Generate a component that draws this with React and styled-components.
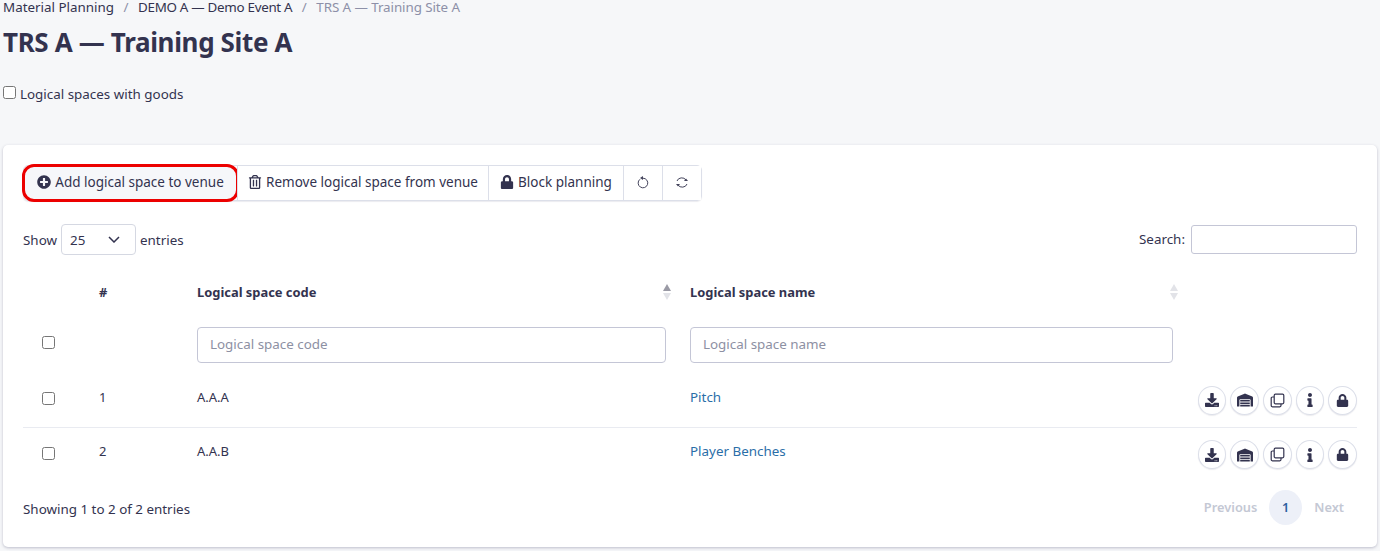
import React from 'react';
import styled, { createGlobalStyle } from 'styled-components';
import { FaPlusCircle, FaRegTrashAlt, FaLock, FaDownload, FaWarehouse, FaInfo } from 'react-icons/fa';

const GlobalStyle = createGlobalStyle`
	html, body {
		margin: 0;
		background: #f6f7f9;
		color: #33334f;
		font-family: "Noto Sans", "Liberation Sans", sans-serif;
		font-size: 13.4px;
	}
`;

const Page = styled.div`
	padding: 0 3px;
	height: 551px;
	box-sizing: border-box;
	overflow: hidden;
`;
const Breadcrumbs = styled.nav`
	display: flex;
	gap: 9.5px;
	height: 14px;
	line-height: 14px;
	font-size: 13.4px;
`;
const Crumb = styled.span`
	color: ${props => props.$muted ? '#8d90a8' : '#33334f'};
	letter-spacing: ${props => props.$tight || 0}px;
`;
const Divider = styled.span`
	color: #8d90a8;
`;
const Title = styled.h1`
	margin: 12px 0 0;
	font-size: 26px;
	line-height: 32px;
	font-weight: 700;
	letter-spacing: -0.35px;
	color: #33334f;
`;
const GoodsLabel = styled.label`
	display: flex;
	align-items: center;
	gap: 4px;
	margin-top: 26px;
	height: 20px;
`;
const Check = styled.input.attrs({ type: 'checkbox' })`
	appearance: none;
	display: block;
	width: 13px;
	height: 13px;
	margin: 0;
	background: #fff;
	border: 1px solid #767676;
	border-radius: 2.5px;
	box-sizing: border-box;
`;
const GoodsCheck = styled(Check)`
	margin-bottom: 4px;
`;
const Card = styled.section`
	margin-top: 41px;
	height: 402px;
	box-sizing: border-box;
	padding: 20px;
	background: #fff;
	border-radius: 5px;
	box-shadow: 0 1px 3px rgba(60, 60, 100, 0.3);
`;
const Toolbar = styled.div`
	display: inline-flex;
	height: 36px;
	border: 1px solid #dcdfe9;
	border-radius: 5px;
	box-sizing: border-box;
	box-shadow: 0 1px 1px rgba(60, 60, 100, 0.1);
`;
const ToolButton = styled.button`
	position: relative;
	display: flex;
	align-items: center;
	justify-content: center;
	gap: 4px;
	width: ${props => props.$width}px;
	padding: 0 0 2px;
	border: 0;
	border-left: ${props => props.$first ? '0' : '1px solid #dcdfe9'};
	background: ${props => props.$active ? '#f6f7fa' : '#fff'};
	color: #33334f;
	font: inherit;
	font-size: 13.5px;
	white-space: nowrap;
	border-radius: ${props => props.$active ? '10px' : '0'};
	outline: ${props => props.$active ? '3px solid #ec0000' : 'none'};
	outline-offset: -1px;
	svg {
		flex: none;
	}
`;
const Controls = styled.div`
	display: flex;
	justify-content: space-between;
	align-items: center;
	margin-top: 23px;
	height: 31px;
`;
const Inline = styled.div`
	display: flex;
	align-items: center;
	gap: ${props => props.$gap || 4}px;
`;
const SearchLabel = styled.span`
	padding-bottom: 2px;
`;
const LengthSelect = styled.div`
	display: flex;
	align-items: center;
	justify-content: space-between;
	width: 75px;
	height: 31px;
	padding: 0 15px 0 8px;
	box-sizing: border-box;
	border: 1px solid #d5d8e2;
	border-radius: 4px;
`;
const SearchBox = styled.input`
	width: 166px;
	height: 29px;
	padding: 0 8px;
	box-sizing: border-box;
	border: 1px solid #c4c6d6;
	border-radius: 3px;
	background: #fff;
`;
const Table = styled.table`
	width: 100%;
	margin-top: 15px;
	table-layout: fixed;
	border-collapse: collapse;
`;
const HeadCell = styled.th`
	position: relative;
	height: 47px;
	box-sizing: border-box;
	padding: 0 12px 3px;
	text-align: left;
	font-weight: 700;
	font-size: 12.9px;
	color: #33334f;
`;
const FilterCell = styled.td`
	height: 56px;
	box-sizing: border-box;
	padding: 0 12px;
	vertical-align: middle;
`;
const BodyRow = styled.tr`
	border-top: ${props => props.$lined ? '1px solid #e9ebf1' : '0'};
`;
const BodyCell = styled.td`
	height: ${props => props.$height}px;
	box-sizing: border-box;
	padding: 0 12px 6px;
	vertical-align: middle;
	font-size: 13px;
`;
const CheckCell = styled(BodyCell)`
	padding: 0 0 2px 19px;
`;
const CheckHolder = styled(FilterCell)`
	padding: 0 0 6px 19px;
`;
const ActionCell = styled.td`
	padding: 1px 0 0;
	vertical-align: middle;
`;
const Filter = styled.input`
	display: block;
	width: 100%;
	height: 36px;
	padding: 0 12px 2px;
	box-sizing: border-box;
	border: 1px solid #c4c6d6;
	border-radius: 4px;
	background: #fff;
	font: inherit;
	&::placeholder {
		color: #8d90a3;
		opacity: 1;
	}
`;
const SpaceLink = styled.a`
	color: #2a6ea8;
	font-size: 13.4px;
	text-decoration: none;
`;
const Actions = styled.div`
	display: flex;
	justify-content: flex-end;
	gap: 4px;
`;
const RoundButton = styled.button`
	display: flex;
	align-items: center;
	justify-content: center;
	width: 28.7px;
	height: 29px;
	padding: 0;
	border: 1px solid #dcdfe9;
	border-radius: 50%;
	background: #fff;
	color: #33334f;
	box-shadow: 0 1px 1px rgba(60, 60, 100, 0.1);
`;
const Sorter = styled.svg`
	position: absolute;
	top: 13px;
	right: 6px;
`;
const Footer = styled.div`
	display: flex;
	justify-content: space-between;
	align-items: center;
	margin-top: 8px;
	height: 36px;
`;
const Summary = styled.span`
	margin-top: 3px;
`;
const Pagination = styled.div`
	display: flex;
	align-items: center;
	gap: 12px;
	padding-right: 13px;
	font-size: 12.8px;
	font-weight: 600;
	color: #c4c8d4;
`;
const CurrentPage = styled.span`
	display: flex;
	align-items: center;
	justify-content: center;
	width: 33px;
	height: 35px;
	border-radius: 50%;
	background: #edf0f8;
	color: #2c5f9e;
`;

const SortIcon = ({ up }) => (
	<Sorter width="10" height="18" viewBox="0 0 10 18">
		<path d="M5 1 L9 8 H1 Z" fill={up ? '#9a9aa5' : '#e2e3e8'} />
		<path d="M5 17 L9 10 H1 Z" fill="#e2e3e8" />
	</Sorter>
);

const UndoIcon = () => (
	<svg width="13" height="14" viewBox="0 0 13 14" fill="none" stroke="#44445c" strokeWidth="1">
		<path d="M2.9 4.3 A4.8 4.8 0 1 0 6 3.2" />
		<path d="M6 1 V5 L3 3 Z" fill="#44445c" stroke="none" />
	</svg>
);

const RefreshIcon = () => (
	<svg width="14" height="13" viewBox="0 0 14 13" fill="none" stroke="#44445c" strokeWidth="1">
		<path d="M2 5 A5 4.6 0 0 1 11 4" />
		<path d="M12 8 A5 4.6 0 0 1 3 9" />
		<path d="M9 5 H13 L11 2.6 Z M1 8 H5 L3 10.4 Z" fill="#44445c" stroke="none" />
	</svg>
);

const CloneIcon = () => (
	<svg width="15" height="15" viewBox="0 0 15 15" fill="none" stroke="#33334f" strokeWidth="1.2">
		<rect x="4.2" y="1.2" width="9.6" height="9.6" rx="1.2" />
		<path d="M4 4 H2.4 A1.2 1.2 0 0 0 1.2 5.2 V12.6 A1.2 1.2 0 0 0 2.4 13.8 H9.8 A1.2 1.2 0 0 0 11 12.6 V11" />
	</svg>
);

const rows = [
	{ id: 1, code: 'A.A.A', name: 'Pitch', height: 54 },
	{ id: 2, code: 'A.A.B', name: 'Player Benches', height: 54 },
];

const App = () => (
	<Page>
		<GlobalStyle />
		<Breadcrumbs>
			<Crumb>Material Planning</Crumb>
			<Divider>/</Divider>
			<Crumb $tight={-0.3}>DEMO A — Demo Event A</Crumb>
			<Divider>/</Divider>
			<Crumb $muted $tight={-0.08}>TRS A — Training Site A</Crumb>
		</Breadcrumbs>
		<Title>TRS A — Training Site A</Title>
		<GoodsLabel><GoodsCheck />Logical spaces with goods</GoodsLabel>
		<Card>
			<Toolbar>
				<ToolButton $first $active $width={213}><FaPlusCircle size={14} />Add logical space to venue</ToolButton>
				<ToolButton $width={251}><FaRegTrashAlt size={14} />Remove logical space from venue</ToolButton>
				<ToolButton $width={135}><FaLock size={14} />Block planning</ToolButton>
				<ToolButton $width={39}><UndoIcon /></ToolButton>
				<ToolButton $width={39}><RefreshIcon /></ToolButton>
			</Toolbar>
			<Controls>
				<Inline>
					Show
					<LengthSelect>
						25
						<svg width="12" height="7" viewBox="0 0 12 7" fill="none" stroke="#33334f" strokeWidth="1.5"><path d="M1 1 L6 6 L11 1" /></svg>
					</LengthSelect>
					entries
				</Inline>
				<Inline $gap={6}>
					<SearchLabel>Search:</SearchLabel>
					<SearchBox />
				</Inline>
			</Controls>
			<Table>
				<colgroup>
					<col style={{ width: 64 }} />
					<col style={{ width: 98 }} />
					<col style={{ width: 493 }} />
					<col style={{ width: 507 }} />
					<col style={{ width: 172 }} />
				</colgroup>
				<thead>
					<tr>
						<HeadCell />
						<HeadCell>#</HeadCell>
						<HeadCell>Logical space code<SortIcon up /></HeadCell>
						<HeadCell>Logical space name<SortIcon /></HeadCell>
						<HeadCell />
					</tr>
					<tr>
						<CheckHolder><Check /></CheckHolder>
						<FilterCell />
						<FilterCell><Filter placeholder="Logical space code" /></FilterCell>
						<FilterCell><Filter placeholder="Logical space name" /></FilterCell>
						<FilterCell />
					</tr>
				</thead>
				<tbody>
					{rows.map((row, index) => (
						<BodyRow key={row.id} $lined={index > 0}>
							<CheckCell $height={row.height}><Check /></CheckCell>
							<BodyCell $height={row.height}>{row.id}</BodyCell>
							<BodyCell $height={row.height}>{row.code}</BodyCell>
							<BodyCell $height={row.height}><SpaceLink>{row.name}</SpaceLink></BodyCell>
							<ActionCell>
								<Actions>
									<RoundButton><FaDownload size={14} /></RoundButton>
									<RoundButton><FaWarehouse size={16} /></RoundButton>
									<RoundButton><CloneIcon /></RoundButton>
									<RoundButton><FaInfo size={14} /></RoundButton>
									<RoundButton><FaLock size={13} /></RoundButton>
								</Actions>
							</ActionCell>
						</BodyRow>
					))}
				</tbody>
			</Table>
			<Footer>
				<Summary>Showing 1 to 2 of 2 entries</Summary>
				<Pagination>
					<span>Previous</span>
					<CurrentPage>1</CurrentPage>
					<span>Next</span>
				</Pagination>
			</Footer>
		</Card>
	</Page>
);

export default App;
